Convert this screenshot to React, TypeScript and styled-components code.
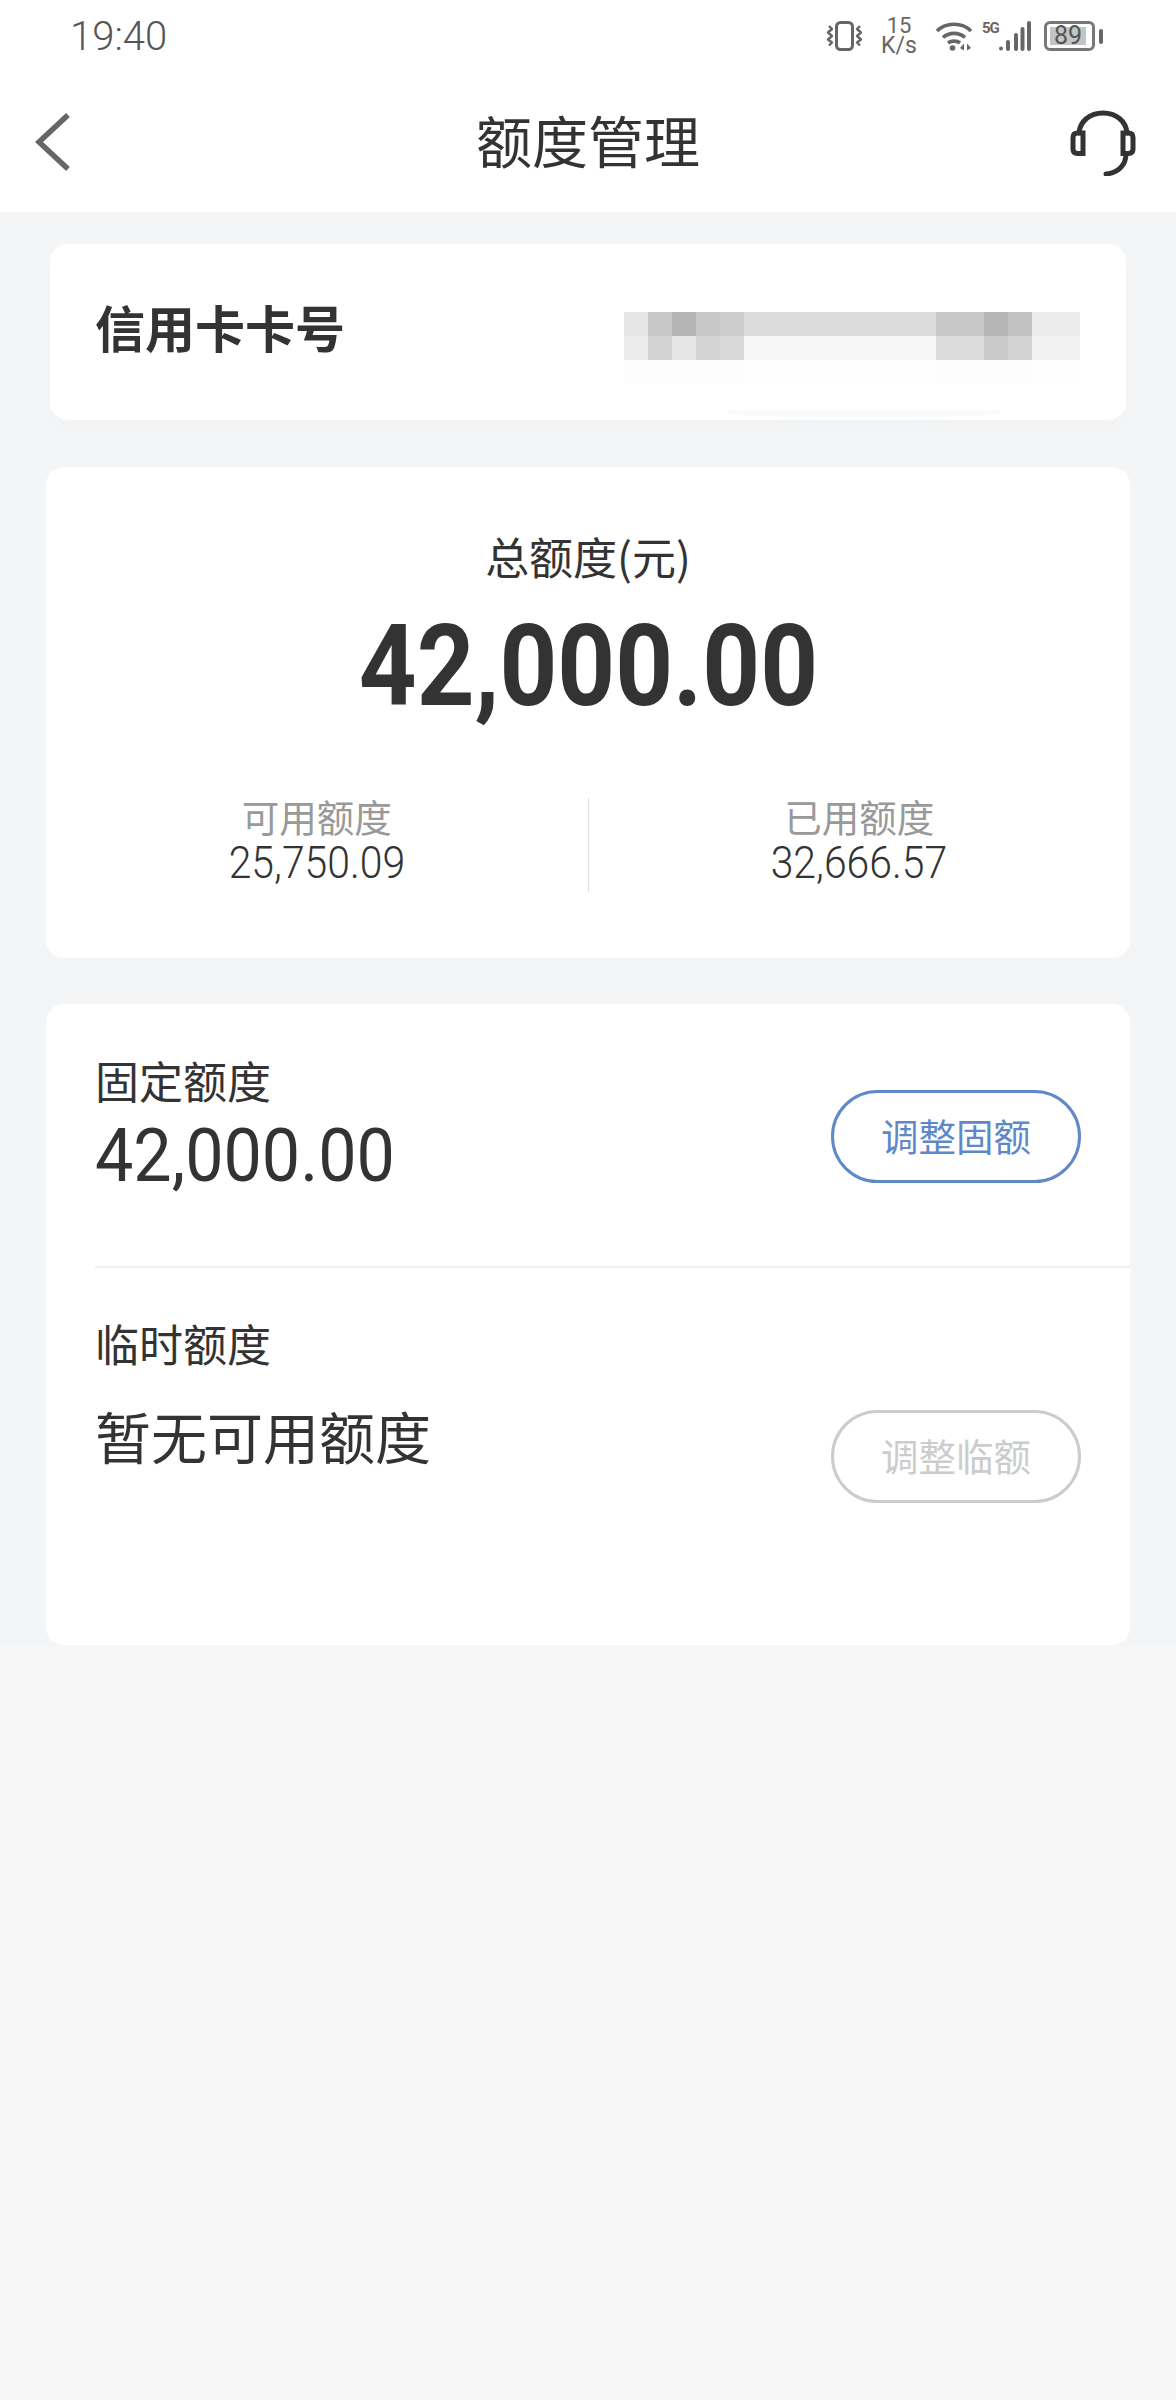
import React from 'react';
import styled, { createGlobalStyle } from 'styled-components';

const GlobalStyle = createGlobalStyle`
    html, body {
        margin: 0;
        padding: 0;
        background: #f7f7f8;
    }
    * {
        box-sizing: border-box;
    }
`

const CJK = `"Noto Sans CJK SC", "Noto Sans", sans-serif`
const NUM = `Roboto, "Liberation Sans", sans-serif`

const MASK_ROWS = [
    ['e6', 'c8', 'b4', 'c8', 'cc', 'dc', 'dc', 'dc', 'dc', 'dc', 'dc', 'dc', 'dc', 'c8', 'c8', 'b6', 'c2', 'ec', 'ec'],
    ['ec', 'd2', 'e6', 'd4', 'd8', 'f6', 'f6', 'f6', 'f6', 'f6', 'f6', 'f6', 'f6', 'dc', 'dc', 'ca', 'd2', 'f2', 'f2'],
    ['fd', 'fc', 'fd', 'fd', 'fd', 'fe', 'fe', 'fe', 'fe', 'fe', 'fe', 'fe', 'fe', 'fd', 'fd', 'fc', 'fc', 'fe', 'fe'],
];

const App = () => {
    return (
        <Page>
            <GlobalStyle />
            <StatusBar>
                <Time>19:40</Time>
                <StatusIcons>
                    <svg width="37" height="30" viewBox="0 0 37 30" fill="none" stroke="#666" strokeLinejoin="round">
                        <rect x="10.5" y="1.5" width="16" height="27" rx="4" strokeWidth="3" />
                        <path d="M3 5l3 3-4 3.5 4 3.5-4 3.5 4 3-3 3" strokeWidth="2.4" />
                        <path d="M34 5l-3 3 4 3.5-4 3.5 4 3.5-4 3 3 3" strokeWidth="2.4" />
                    </svg>
                    <Speed>
                        <SpeedValue>15</SpeedValue>
                        <SpeedUnit>K/s</SpeedUnit>
                    </Speed>
                    <svg width="38" height="30" viewBox="0 0 38 30" fill="none" stroke="#666" strokeWidth="3.6">
                        <path d="M2 10C11 1 27 1 36 10" />
                        <path d="M8 16.500C14 11 24 11 30 16.500" />
                        <path d="M13 22C16 19.500 22 19.500 25 22" />
                        <circle cx="17.500" cy="27" r="2.800" fill="#666" stroke="none" />
                        <path d="M25 27l4-4.500v7zM32 22.500l4 4.500-4 2.500z" fill="#666" stroke="none" />
                    </svg>
                    <Network>
                        <NetworkType>5G</NetworkType>
                        <svg width="32" height="30" viewBox="0 0 32 30" fill="#666">
                            <circle cx="2" cy="27.500" r="2" />
                            <rect x="7" y="19" width="4" height="11" rx="2" />
                            <rect x="15" y="12" width="4" height="18" rx="2" />
                            <rect x="21.500" y="6" width="4" height="24" rx="2" />
                            <rect x="28" y="0" width="4" height="30" rx="2" />
                        </svg>
                    </Network>
                    <Battery>
                        <BatteryBody>
                            <BatteryLevel>89</BatteryLevel>
                        </BatteryBody>
                        <BatteryTip />
                    </Battery>
                </StatusIcons>
            </StatusBar>

            <NavBar>
                <BackIcon width="38" height="60" viewBox="0 0 38 60" fill="none" stroke="#666" strokeWidth="5.500">
                    <path d="M35 3L6 30l29 27" />
                </BackIcon>
                <NavTitle>额度管理</NavTitle>
                <ServiceIcon width="66" height="66" viewBox="0 0 66 66" fill="none" stroke="#333" strokeWidth="5">
                    <path d="M9 23C10 11 20 3 33 3s23 8 24 20M56 44c0 11-8 19-20 20" strokeLinecap="round" />
                    <path d="M13 23H7.500Q3 23 3 27.500V39Q3 43.500 7.500 43.500H13zM53 23h5.500Q63 23 63 27.500V39Q63 43.500 58.500 43.500H53z" />
                </ServiceIcon>
            </NavBar>

            <Content>
                <CardNumberCard>
                    <CardNumberLabel>信用卡卡号</CardNumberLabel>
                    <Mosaic>
                        {MASK_ROWS.flat().map((shade, i) => (
                            <MosaicCell key={i} $shade={shade} />
                        ))}
                    </Mosaic>
                    <Smudge />
                </CardNumberCard>

                <TotalCard>
                    <TotalLabel>总额度(元)</TotalLabel>
                    <TotalAmount>42,000.00</TotalAmount>
                    <StatsRow>
                        <Stat>
                            <StatLabel>可用额度</StatLabel>
                            <StatValue>25,750.09</StatValue>
                        </Stat>
                        <StatDivider />
                        <Stat>
                            <StatLabel>已用额度</StatLabel>
                            <StatValue>32,666.57</StatValue>
                        </Stat>
                    </StatsRow>
                </TotalCard>

                <LimitCard>
                    <LimitRow>
                        <div>
                            <LimitLabel>固定额度</LimitLabel>
                            <LimitAmount>42,000.00</LimitAmount>
                        </div>
                        <AdjustButton>调整固额</AdjustButton>
                    </LimitRow>
                    <TempRow>
                        <div>
                            <LimitLabel>临时额度</LimitLabel>
                            <NoLimit>暂无可用额度</NoLimit>
                        </div>
                        <AdjustButton $disabled>调整临额</AdjustButton>
                    </TempRow>
                </LimitCard>
            </Content>
        </Page>
    );
};

export default App;

const Page = styled.div`
    width: 1176px;
    height: 2400px;
    background: #f7f7f8;
    overflow: hidden;
    font-family: ${CJK};
    color: #333333;
`

const StatusBar = styled.div`
    display: flex;
    justify-content: space-between;
    align-items: center;
    height: 72px;
    padding: 0 73px 0 70px;
    background: #ffffff;
`

const Time = styled.span`
    margin-top: 2px;
    font-family: ${NUM};
    font-size: 40px;
    font-weight: 300;
    line-height: 72px;
    color: #555555;
`

const StatusIcons = styled.div`
    display: flex;
    align-items: center;
    gap: 19px;
`

const Speed = styled.div`
    display: flex;
    flex-direction: column;
    align-items: center;
    width: 34px;
    font-family: ${NUM};
    color: #666666;
`

const SpeedValue = styled.span`
    font-size: 22px;
    line-height: 20px;
`

const SpeedUnit = styled.span`
    font-size: 23px;
    line-height: 20px;
`

const Network = styled.div`
    display: flex;
    align-items: flex-start;
    gap: 1px;
    margin-left: -10px;
`

const NetworkType = styled.span`
    width: 16px;
    font-family: ${NUM};
    font-size: 15px;
    font-weight: 700;
    line-height: 14px;
    letter-spacing: -1px;
    color: #666666;
`

const Battery = styled.div`
    display: flex;
    align-items: center;
    gap: 4px;
    margin-left: -6px;
`

const BatteryBody = styled.div`
    display: flex;
    width: 51px;
    height: 30px;
    padding: 3px;
    border: 3px solid #777777;
    border-radius: 6px;
`

const BatteryLevel = styled.div`
    width: 36px;
    background: #c4c4c4;
    font-family: ${NUM};
    font-size: 25px;
    line-height: 18px;
    text-align: center;
    color: #555555;
`

const BatteryTip = styled.div`
    width: 4px;
    height: 15px;
    border-radius: 2px;
    background: #666666;
`

const NavBar = styled.div`
    display: grid;
    grid-template-columns: 1fr auto 1fr;
    align-items: center;
    height: 140px;
    padding: 0 40px;
    background: #ffffff;
`

const BackIcon = styled.svg`
    margin-left: -7px;
`

const ServiceIcon = styled.svg`
    justify-self: end;
    margin-top: 2px;
`

const NavTitle = styled.h1`
    margin: 0 0 6px;
    font-size: 56px;
    font-weight: 400;
    line-height: 64px;
    color: #333333;
`

const Content = styled.div`
    display: flex;
    flex-direction: column;
    height: 1433px;
    padding: 32px 46px 0;
    background: #f4f5f7;
`

const Card = styled.div`
    background: #ffffff;
    border-radius: 18px;
`

const CardNumberCard = styled(Card)`
    position: relative;
    display: flex;
    justify-content: space-between;
    align-items: center;
    height: 176px;
    margin: 0 4px 47px;
    padding: 0 46px 0 45px;
    box-shadow: 0 12px 20px rgba(0, 0, 0, 0.012);
`

const CardNumberLabel = styled.span`
    margin-top: -12px;
    font-size: 50px;
    font-weight: 700;
    line-height: 60px;
    color: #333333;
`

const Mosaic = styled.div`
    display: grid;
    grid-template-columns: repeat(19, 24px);
    grid-auto-rows: 24px;
    margin-top: 32px;
`

const MosaicCell = styled.div<{ $shade: string }>`
    background: ${({ $shade }) => `#${$shade}${$shade}${$shade}`};
`

const Smudge = styled.div`
    position: absolute;
    left: 678px;
    bottom: 3px;
    width: 272px;
    height: 7px;
    border-radius: 0 0 50% 50%;
    background: #f9fafb;
`

const TotalCard = styled(Card)`
    display: flex;
    flex-direction: column;
    align-items: center;
    height: 491px;
    margin-bottom: 46px;
    padding-top: 59px;
`

const TotalLabel = styled.div`
    font-size: 44px;
    line-height: 60px;
    color: #333333;
`

const TotalAmount = styled.div`
    margin-top: 20px;
    font-family: ${NUM};
    font-size: 114px;
    font-weight: 700;
    line-height: 120px;
    color: #333333;
    transform: scaleX(0.885);
`

const StatsRow = styled.div`
    display: flex;
    align-self: stretch;
    height: 96px;
    margin-top: 70px;
`

const Stat = styled.div`
    display: flex;
    flex: 1;
    flex-direction: column;
    align-items: center;
`

const StatDivider = styled.div`
    width: 1px;
    margin-top: 2px;
    background: #dddddd;
`

const StatLabel = styled.div`
    font-size: 37.500px;
    line-height: 40px;
    color: #999999;
`

const StatValue = styled.div`
    font-family: ${NUM};
    font-size: 44px;
    font-weight: 300;
    line-height: 54px;
    color: #333333;
    transform: scaleX(0.93);
`

const LimitCard = styled(Card)`
    height: 641px;
`

const LimitRow = styled.div`
    display: flex;
    justify-content: space-between;
    align-items: center;
    height: 264px;
    margin-left: 49px;
    padding-right: 49px;
    border-bottom: 2px solid #eeeeee;
`

const TempRow = styled.div`
    display: flex;
    justify-content: space-between;
    align-items: flex-start;
    margin-left: 49px;
    padding: 45px 49px 0 0;
`

const LimitLabel = styled.div`
    font-size: 44px;
    line-height: 60px;
    color: #333333;
`

const LimitAmount = styled.div`
    margin: 2px 0 22px;
    font-family: ${NUM};
    font-size: 75px;
    font-weight: 400;
    line-height: 86px;
    color: #333333;
    transform: scaleX(0.91);
    transform-origin: left center;
`

const NoLimit = styled.div`
    margin-top: 22px;
    font-size: 56px;
    line-height: 80px;
    color: #333333;
`

const AdjustButton = styled.button<{ $disabled?: boolean }>`
    width: 250px;
    height: 93px;
    margin-top: ${({ $disabled }) => ($disabled ? '97px' : '3px')};
    padding: 0 0 4px;
    background: transparent;
    border: 3px solid ${({ $disabled }) => ($disabled ? '#cccccc' : '#6089c8')};
    border-radius: 47px;
    font-family: ${CJK};
    font-size: 37.500px;
    line-height: 44px;
    color: ${({ $disabled }) => ($disabled ? '#cccccc' : '#5f88c9')};
`
